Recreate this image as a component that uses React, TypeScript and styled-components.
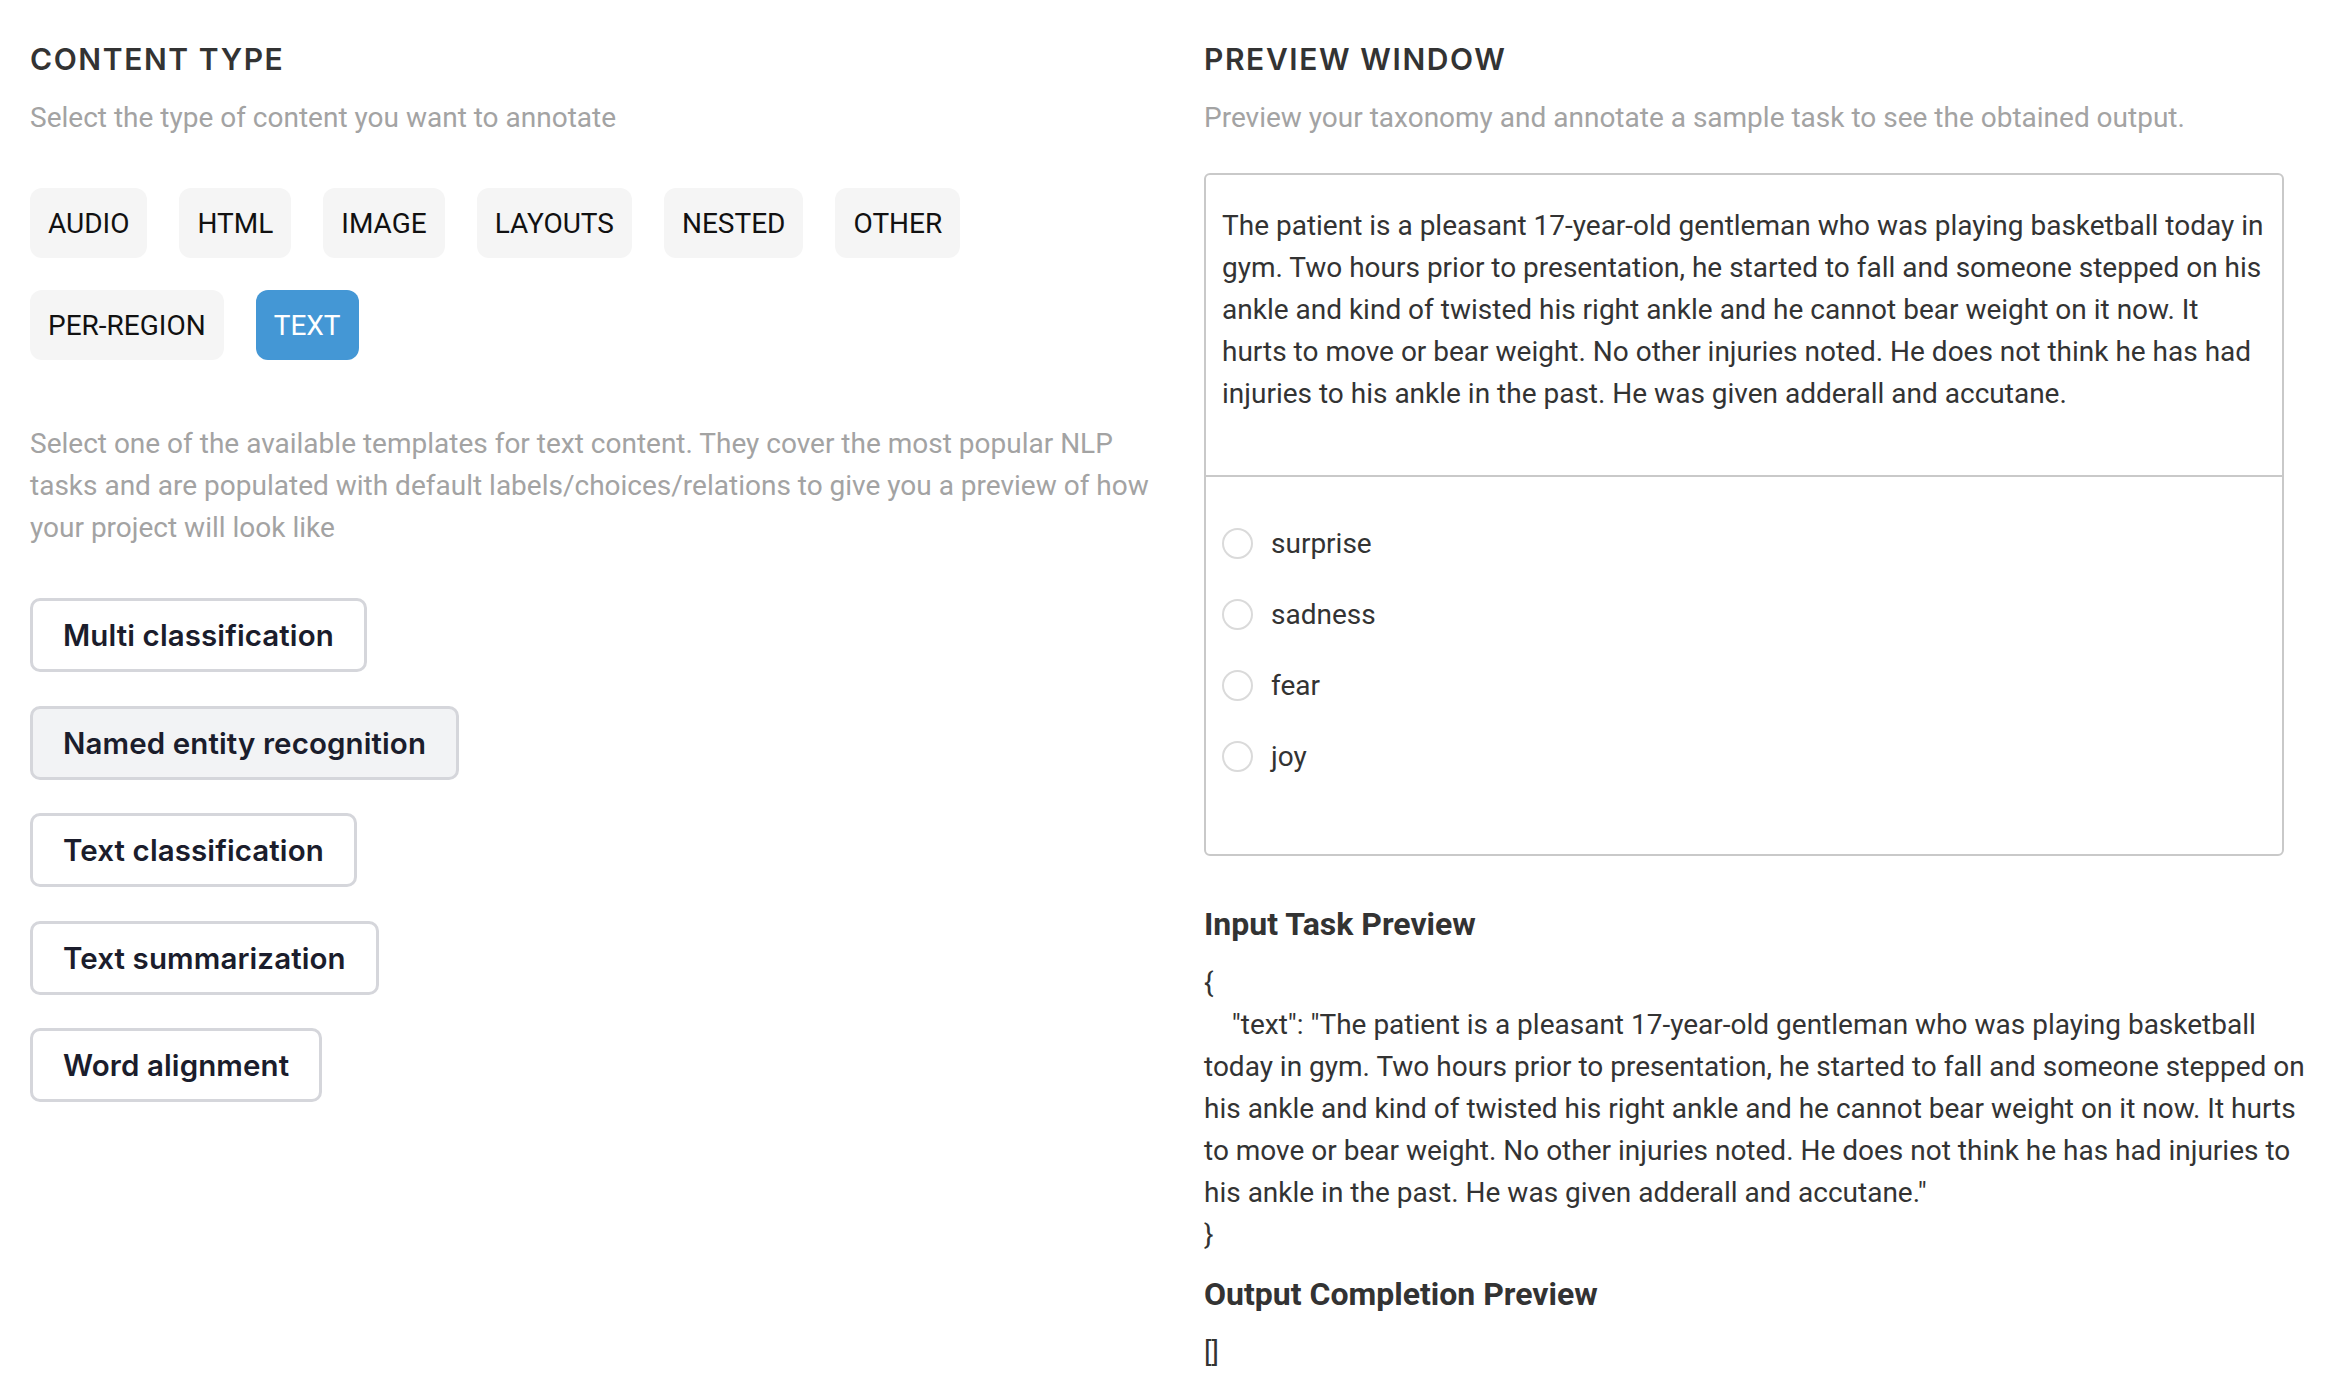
import React from "react";
import styled, { createGlobalStyle } from "styled-components";

const GlobalStyle = createGlobalStyle`
  html, body {
    margin: 0;
    padding: 0;
    background: #ffffff;
    overflow: hidden;
  }
  body {
    font-family: Roboto, "Liberation Sans", Arial, sans-serif;
    -webkit-font-smoothing: antialiased;
  }
  * { box-sizing: border-box; }
`;

const Page = styled.div`
  display: grid;
  grid-template-columns: 1130px 1106px;
  column-gap: 44px;
  padding: 41px 20px 0 30px;
  width: 2330px;
  height: 1376px;
`;

const Column = styled.section`
  display: flex;
  flex-direction: column;
  align-items: flex-start;
  min-width: 0;
`;

const SectionTitle = styled.h2`
  margin: 0;
  font-family: Inter, "Open Sans", sans-serif;
  font-weight: 600;
  font-size: 30px;
  line-height: 36px;
  letter-spacing: 1.6px;
  color: #333333;
`;

const Muted = styled.p<{ $top: number }>`
  margin: ${(p) => p.$top}px 0 0;
  font-family: Roboto, sans-serif;
  font-size: 28px;
  line-height: 42px;
  color: #a3a3a3;
`;

const TypeGrid = styled.div`
  display: flex;
  flex-wrap: wrap;
  gap: 32px;
  margin-top: 49px;
`;

const TypeButton = styled.button<{ $active?: boolean }>`
  height: 70px;
  padding: 0 18px;
  border: none;
  border-radius: 12px;
  background: ${(p) => (p.$active ? "#4497d5" : "#f5f5f5")};
  color: ${(p) => (p.$active ? "#ffffff" : "#111111")};
  font-family: Roboto, sans-serif;
  font-size: 28px;
  font-weight: 400;
  cursor: pointer;
`;

const TemplateList = styled.div`
  display: flex;
  flex-direction: column;
  align-items: flex-start;
  gap: 33.5px;
  margin-top: 49px;
`;

const TemplateButton = styled.button<{ $hover?: boolean }>`
  height: 74px;
  padding: 0 30px;
  border: 3px solid #d5d6db;
  border-radius: 10px;
  background: ${(p) => (p.$hover ? "#f2f3f5" : "#ffffff")};
  color: #1b1d2c;
  font-family: Inter, "Open Sans", sans-serif;
  font-size: 29.5px;
  font-weight: 600;
  letter-spacing: 0.1px;
  cursor: pointer;
`;

const PreviewBox = styled.div`
  width: 1080px;
  margin-top: 34px;
  border: 2px solid #c9c9c9;
  border-radius: 6px;
`;

const SampleText = styled.div`
  padding: 30px 16px 60px 16px;
  font-size: 28px;
  line-height: 42px;
  color: #333333;
`;

const Choices = styled.div`
  border-top: 2px solid #c9c9c9;
  padding: 31px 16px 62px 16px;
  display: flex;
  flex-direction: column;
`;

const ChoiceRow = styled.label`
  display: flex;
  align-items: center;
  gap: 18px;
  height: 71px;
  font-size: 28px;
  color: #333333;
`;

const Radio = styled.span`
  width: 31px;
  height: 31px;
  border-radius: 50%;
  border: 2px solid #dadada;
  background: #ffffff;
  flex-shrink: 0;
`;

const SubHeading = styled.h3<{ $top: number }>`
  margin: ${(p) => p.$top}px 0 0;
  font-family: Roboto, sans-serif;
  font-weight: 700;
  font-size: 32px;
  line-height: 36px;
  color: #333333;
`;

const Code = styled.div`
  margin-top: 20px;
  white-space: pre-wrap;
  font-family: Roboto, sans-serif;
  font-size: 28px;
  line-height: 42px;
  color: #333333;
  width: 100%;
`;

const sample =
  "The patient is a pleasant 17-year-old gentleman who was playing basketball today in gym. Two hours prior to presentation, he started to fall and someone stepped on his ankle and kind of twisted his right ankle and he cannot bear weight on it now. It hurts to move or bear weight. No other injuries noted. He does not think he has had injuries to his ankle in the past. He was given adderall and accutane.";

const types = ["AUDIO", "HTML", "IMAGE", "LAYOUTS", "NESTED", "OTHER", "PER-REGION", "TEXT"];
const templates = [
  "Multi classification",
  "Named entity recognition",
  "Text classification",
  "Text summarization",
  "Word alignment",
];
const choices = ["surprise", "sadness", "fear", "joy"];

export default function App() {
  return (
    <>
      <GlobalStyle />
      <Page>
        <Column>
          <SectionTitle>CONTENT TYPE</SectionTitle>
          <Muted $top={20}>Select the type of content you want to annotate</Muted>
          <TypeGrid>
            {types.map((t) => (
              <TypeButton key={t} $active={t === "TEXT"}>
                {t}
              </TypeButton>
            ))}
          </TypeGrid>
          <Muted $top={63}>
            Select one of the available templates for text content. They cover the most popular NLP
            tasks and are populated with default labels/choices/relations to give you a preview of how
            your project will look like
          </Muted>
          <TemplateList>
            {templates.map((t) => (
              <TemplateButton key={t} $hover={t === "Named entity recognition"}>
                {t}
              </TemplateButton>
            ))}
          </TemplateList>
        </Column>
        <Column>
          <SectionTitle>PREVIEW WINDOW</SectionTitle>
          <Muted $top={20}>
            Preview your taxonomy and annotate a sample task to see the obtained output.
          </Muted>
          <PreviewBox>
            <SampleText>{sample}</SampleText>
            <Choices>
              {choices.map((c) => (
                <ChoiceRow key={c}>
                  <Radio />
                  {c}
                </ChoiceRow>
              ))}
            </Choices>
          </PreviewBox>
          <SubHeading $top={50}>Input Task Preview</SubHeading>
          <Code>{`{\n    "text": "${sample}"\n}`}</Code>
          <SubHeading $top={20}>Output Completion Preview</SubHeading>
          <Code>[]</Code>
        </Column>
      </Page>
    </>
  );
}
